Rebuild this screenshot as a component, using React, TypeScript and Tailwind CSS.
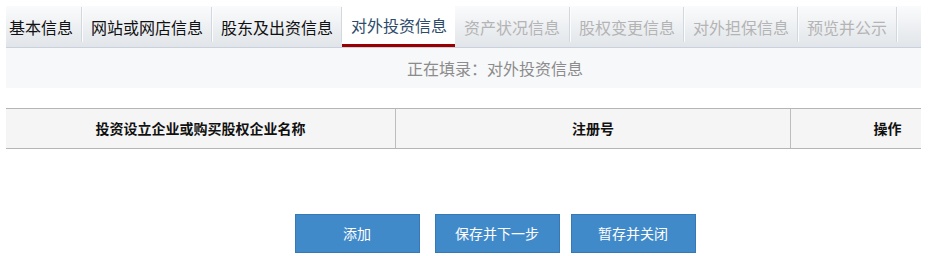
import React from "react";

const tabs: { label: string; state: "done" | "active" | "disabled"; cls: string }[] = [
  { label: "基本信息", state: "done", cls: "pl-[3px] pr-[8px]" },
  { label: "网站或网店信息", state: "done", cls: "pl-[9px] pr-[8px]" },
  { label: "股东及出资信息", state: "done", cls: "pl-[9px] pr-[8px]" },
  { label: "对外投资信息", state: "active", cls: "pl-[9px] pr-[8px]" },
  { label: "资产状况信息", state: "disabled", cls: "pl-[9px] pr-[9px]" },
  { label: "股权变更信息", state: "disabled", cls: "pl-[9px] pr-[8px]" },
  { label: "对外担保信息", state: "disabled", cls: "pl-[9px] pr-[8px]" },
  { label: "预览并公示", state: "disabled", cls: "pl-[9px] pr-[9px]" },
];

export default function App() {
  return (
    <div
      className="w-[931px] h-[256px] bg-white pl-[6px] pt-[6px] overflow-hidden"
      style={{ fontFamily: '"Noto Sans CJK SC", "Noto Sans", sans-serif' }}
    >
      <div className="w-[915px] overflow-hidden">
        <div className="w-[978px]">
          {/* Tab bar */}
          <div className="flex h-[42px] bg-gradient-to-b from-[#fafbfc] to-[#e1e5e9] border-b border-[#c9d2dc]">
            {tabs.map((t) => {
              if (t.state === "active") {
                return (
                  <div
                    key={t.label}
                    className={`flex items-center h-[41px] bg-white border-b-[3px] border-[#9a0000] text-[16px] text-[#2d4b6b] ${t.cls}`}
                  >
                    <span className="leading-none">{t.label}</span>
                  </div>
                );
              }
              return (
                <div key={t.label} className="flex items-start h-[41px]">
                  <div
                    className={`flex items-center h-[41px] text-[16px] ${t.cls} ${
                      t.state === "done" ? "text-[#111]" : "text-[#b4b4b4]"
                    }`}
                  >
                    <span className="leading-none">{t.label}</span>
                  </div>
                  <div className="w-px h-[35px] mt-[1px] bg-[#d3d8de] shadow-[1px_0_0_#fbfcfd]" />
                </div>
              );
            })}
          </div>

          {/* Info line */}
          <div className="h-[40px] bg-[#f7f8fa] flex items-center justify-center text-[16px] text-[#8c8c8c]">
            正在填录：对外投资信息
          </div>

          {/* Table */}
          <div className="mt-[20px] flex h-[41px] bg-[#f5f5f5] border-t border-b border-[#b5b5b5] text-[14px] font-bold text-[#111]">
            <div className="w-[390px] flex items-center justify-center border-r border-[#bdbdbd]">
              投资设立企业或购买股权企业名称
            </div>
            <div className="w-[395px] flex items-center justify-center border-r border-[#bdbdbd]">
              注册号
            </div>
            <div className="flex-1 flex items-center justify-center">操作</div>
          </div>

          {/* Buttons */}
          <div className="mt-[65px] flex justify-center">
            <button className="w-[125px] h-[39px] bg-[#418aca] border border-[#3679b5] text-white text-[14px]">
              添加
            </button>
            <button className="ml-[15px] w-[125px] h-[39px] bg-[#418aca] border border-[#3679b5] text-white text-[14px]">
              保存并下一步
            </button>
            <button className="ml-[11px] w-[125px] h-[39px] bg-[#418aca] border border-[#3679b5] text-white text-[14px]">
              暂存并关闭
            </button>
          </div>
        </div>
      </div>
    </div>
  );
}
